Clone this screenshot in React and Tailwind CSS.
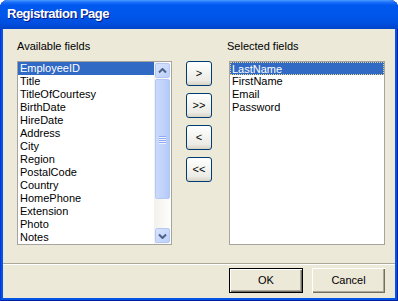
const LEFT = ["EmployeeID","Title","TitleOfCourtesy","BirthDate","HireDate","Address","City","Region","PostalCode","Country","HomePhone","Extension","Photo","Notes"];
const RIGHT = ["LastName","FirstName","Email","Password"];

function Chevron({ down }) {
  return (
    <svg width="9" height="6" viewBox="0 0 9 6">
      <polyline
        points={down ? "1,1.5 4.5,5 8,1.5" : "1,4.5 4.5,1 8,4.5"}
        fill="none"
        stroke="#4d6185"
        strokeWidth="2"
      />
    </svg>
  );
}

function ScrollBtn({ down }) {
  return (
    <div className="h-[17px] w-[17px] p-[1px] shrink-0">
      <div className="h-full w-full rounded-[2px] border border-[#b4c8f6] bg-[linear-gradient(to_bottom_right,#d8e4fe,#bcd0fb)] flex items-center justify-center">
        <Chevron down={down} />
      </div>
    </div>
  );
}

function Scrollbar() {
  return (
    <div className="w-[17px] h-full flex flex-col bg-[linear-gradient(to_right,#f3f1ec,#fefefb)]">
      <ScrollBtn />
      <div className="h-[121px] w-[17px] p-[1px] pt-0 shrink-0">
        <div className="h-full w-full rounded-[2px] border border-[#b4c8f6] bg-[linear-gradient(to_right,#cad9fd,#bfd2fb_60%,#b4c9f8)] flex flex-col items-center justify-center gap-[1px]">
          <div className="w-[7px] h-[1px] bg-[#8eaaf0] shadow-[0_1px_0_#eef3ff]" />
          <div className="w-[7px] h-[1px] bg-[#8eaaf0] shadow-[0_1px_0_#eef3ff]" />
          <div className="w-[7px] h-[1px] bg-[#8eaaf0] shadow-[0_1px_0_#eef3ff]" />
          <div className="w-[7px] h-[1px] bg-[#8eaaf0] shadow-[0_1px_0_#eef3ff]" />
        </div>
      </div>
      <div className="flex-1" />
      <ScrollBtn down />
    </div>
  );
}

function XPButton({ children }) {
  return (
    <div className="h-[25px] w-[26px] rounded-[3px] border border-[#003c74] bg-[linear-gradient(to_bottom,#ffffff,#f4f4f0_45%,#ecebe5_80%,#d8d2c6)] flex items-center justify-center text-[11px] text-black leading-none">
      {children}
    </div>
  );
}

export default function App() {
  return (
    <div className="w-[398px] h-[301px] flex flex-col bg-[#0055e5] rounded-t-[8px] overflow-hidden font-['Liberation_Sans',Arial,sans-serif] shadow-[inset_1px_0_0_#0831d9,inset_-1px_0_0_#001ea0,inset_0_-1px_0_#001ea0]">
      <div className="h-[29px] shrink-0 flex items-center pl-[7px] pb-[1px] bg-[linear-gradient(to_bottom,#4c9bff_0%,#1a6ffb_8%,#0058ee_18%,#0056ea_55%,#004fe0_80%,#0043c8_100%)] text-white font-bold text-[13px] tracking-[-0.5px] [text-shadow:1px_1px_0_#0a1883]">
        Registration Page
      </div>
      <div className="flex-1 mx-[3px] mb-[3px] bg-[#ece9d8] flex flex-col text-[11px] text-black">
        <div className="flex pl-[14px] pt-[11px] h-[234px] shrink-0">
          <div className="flex flex-col w-[155px]">
            <div className="h-[13px] leading-[13px]">Available fields</div>
            <div className="mt-[8px] h-[184px] border border-[#a5a49e] bg-white flex">
              <div className="flex-1 flex flex-col">
                {LEFT.map((t, i) => (
                  <div
                    key={t}
                    className={
                      "h-[13px] leading-[13px] pl-[2px] whitespace-nowrap " +
                      (i === 0 ? "bg-[#316ac5] text-white" : "")
                    }
                  >
                    {t}
                  </div>
                ))}
              </div>
              <Scrollbar />
            </div>
          </div>
          <div className="ml-[14px] pt-[21px] flex flex-col gap-[7px]">
            <XPButton>&gt;</XPButton>
            <XPButton>&gt;&gt;</XPButton>
            <XPButton>&lt;</XPButton>
            <XPButton>&lt;&lt;</XPButton>
          </div>
          <div className="ml-[17px] flex flex-col w-[156px]">
            <div className="h-[13px] leading-[13px] -ml-[2px]">Selected fields</div>
            <div className="mt-[8px] h-[184px] border border-[#a5a49e] bg-white flex flex-col">
              {RIGHT.map((t, i) => (
                <div
                  key={t}
                  className={
                    "h-[13px] leading-[13px] whitespace-nowrap " +
                    (i === 0
                      ? "bg-[#316ac5] text-white border border-dotted border-[#e8d48a] pl-[1px] leading-[11px]"
                      : "pl-[2px]")
                  }
                >
                  {t}
                </div>
              ))}
            </div>
          </div>
        </div>
        <div className="h-[1px] bg-[#aca899] shrink-0" />
        <div className="h-[1px] bg-white shrink-0" />
        <div className="flex justify-end gap-[9px] pr-[10px] pt-[3px]">
          <div className="h-[25px] w-[74px] border border-black shadow-[inset_1px_1px_0_#fff,inset_-1px_-1px_0_#716f64,inset_-2px_-2px_0_#aca899] flex items-center justify-center">
            OK
          </div>
          <div className="h-[25px] w-[73px] shadow-[inset_1px_1px_0_#fff,inset_-1px_-1px_0_#716f64,inset_-2px_-2px_0_#aca899] flex items-center justify-center">
            Cancel
          </div>
        </div>
      </div>
    </div>
  );
}
